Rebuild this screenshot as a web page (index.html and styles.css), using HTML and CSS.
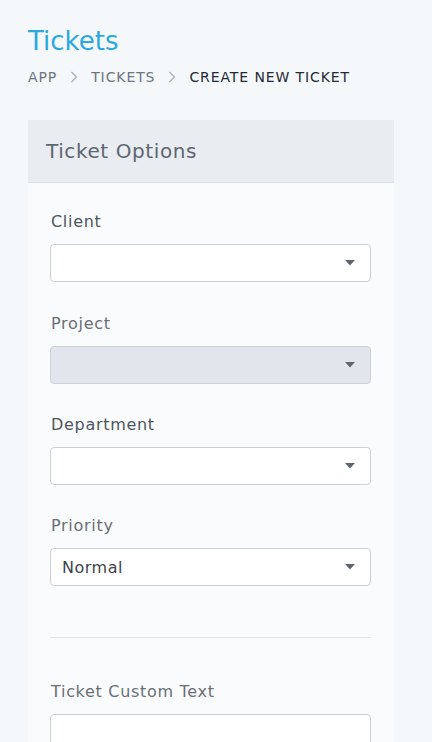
FILE: index.html
```html
<!DOCTYPE html>
<html>
<head>
<meta charset="utf-8">
<link rel="stylesheet" href="styles.css">
</head>
<body>
<div class="page">
  <h1 class="title">Tickets</h1>
  <nav class="crumbs">
    <span class="crumb">APP</span>
    <svg class="chev" width="8" height="12" viewBox="0 0 8 12"><path d="M1.5 1 L6.5 6 L1.5 11" fill="none" stroke="#a9b1ba" stroke-width="1.3"/></svg>
    <span class="crumb">TICKETS</span>
    <svg class="chev" width="8" height="12" viewBox="0 0 8 12"><path d="M1.5 1 L6.5 6 L1.5 11" fill="none" stroke="#a9b1ba" stroke-width="1.3"/></svg>
    <span class="crumb active">CREATE NEW TICKET</span>
  </nav>
  <section class="card">
    <header class="card-head">Ticket Options</header>
    <div class="card-body">
      <div class="group">
        <label class="label strong">Client</label>
        <div class="select"><span class="value"></span><svg class="caret" width="10" height="6" viewBox="0 0 10 6"><path d="M0 0 H10 L5 5.5 Z" fill="#5f6670"/></svg></div>
      </div>
      <div class="group">
        <label class="label">Project</label>
        <div class="select disabled"><span class="value"></span><svg class="caret" width="10" height="6" viewBox="0 0 10 6"><path d="M0 0 H10 L5 5.5 Z" fill="#5f6670"/></svg></div>
      </div>
      <div class="group">
        <label class="label strong">Department</label>
        <div class="select"><span class="value"></span><svg class="caret" width="10" height="6" viewBox="0 0 10 6"><path d="M0 0 H10 L5 5.5 Z" fill="#5f6670"/></svg></div>
      </div>
      <div class="group">
        <label class="label">Priority</label>
        <div class="select"><span class="value">Normal</span><svg class="caret" width="10" height="6" viewBox="0 0 10 6"><path d="M0 0 H10 L5 5.5 Z" fill="#5f6670"/></svg></div>
      </div>
      <hr class="divider">
      <div class="group">
        <label class="label">Ticket Custom Text</label>
        <div class="textbox"></div>
      </div>
    </div>
  </section>
</div>
</body>
</html>
```
FILE: styles.css
```css
html, body {
  margin: 0;
  padding: 0;
  background: #f5f8fa;
  font-family: "DejaVu Sans", "Noto Sans", sans-serif;
  height: 742px;
  overflow: hidden;
}
.page {
  padding: 26px 38px 0 28px;
}
.title {
  margin: 0;
  font-size: 26px;
  font-weight: 400;
  color: #2ca8e1;
  line-height: 30px;
}
.crumbs {
  display: flex;
  align-items: center;
  gap: 13px;
  margin-top: 12px;
  height: 18px;
}
.crumb {
  font-size: 14px;
  letter-spacing: 0.9px;
  color: #6b7580;
  line-height: 18px;
}
.crumb.active {
  color: #1f2a36;
}
.card {
  margin-top: 34px;
  background: #f9fbfd;
}
.card-head {
  background: #e9edf1;
  border-bottom: 1px solid #d9dfe5;
  padding-left: 18px;
  display: flex;
  align-items: center;
  font-size: 20px;
  letter-spacing: 0.6px;
  color: #5d6670;
  box-sizing: border-box;
  height: 63px;
}
.card-body {
  padding: 29px 23px 0 22px;
}
.group {
  display: flex;
  flex-direction: column;
}
.group + .group {
  margin-top: 31px;
}
.group:nth-child(2) {
  margin-top: 32px;
}
.label {
  font-size: 16px;
  letter-spacing: 0.7px;
  color: #6a6f75;
  line-height: 20px;
  margin-left: 1px;
  margin-bottom: 12px;
}
.label.strong {
  color: #4f555c;
}
.select {
  height: 38px;
  box-sizing: border-box;
  border: 1px solid #ccd1d8;
  border-radius: 4px;
  background: #fff;
  display: flex;
  align-items: center;
  justify-content: space-between;
  padding: 0 15px 0 11px;
}
.select.disabled {
  background: #e2e6ec;
}
.value {
  font-size: 16px;
  letter-spacing: 0.5px;
  color: #3e444b;
}
.divider {
  border: 0;
  border-top: 1px solid #e1e5ea;
  margin: 51px 0 0 0;
}
.divider + .group {
  margin-top: 44px;
}
.textbox {
  height: 38px;
  border: 1px solid #ccd1d8;
  border-radius: 4px;
  background: #fff;
}
```
